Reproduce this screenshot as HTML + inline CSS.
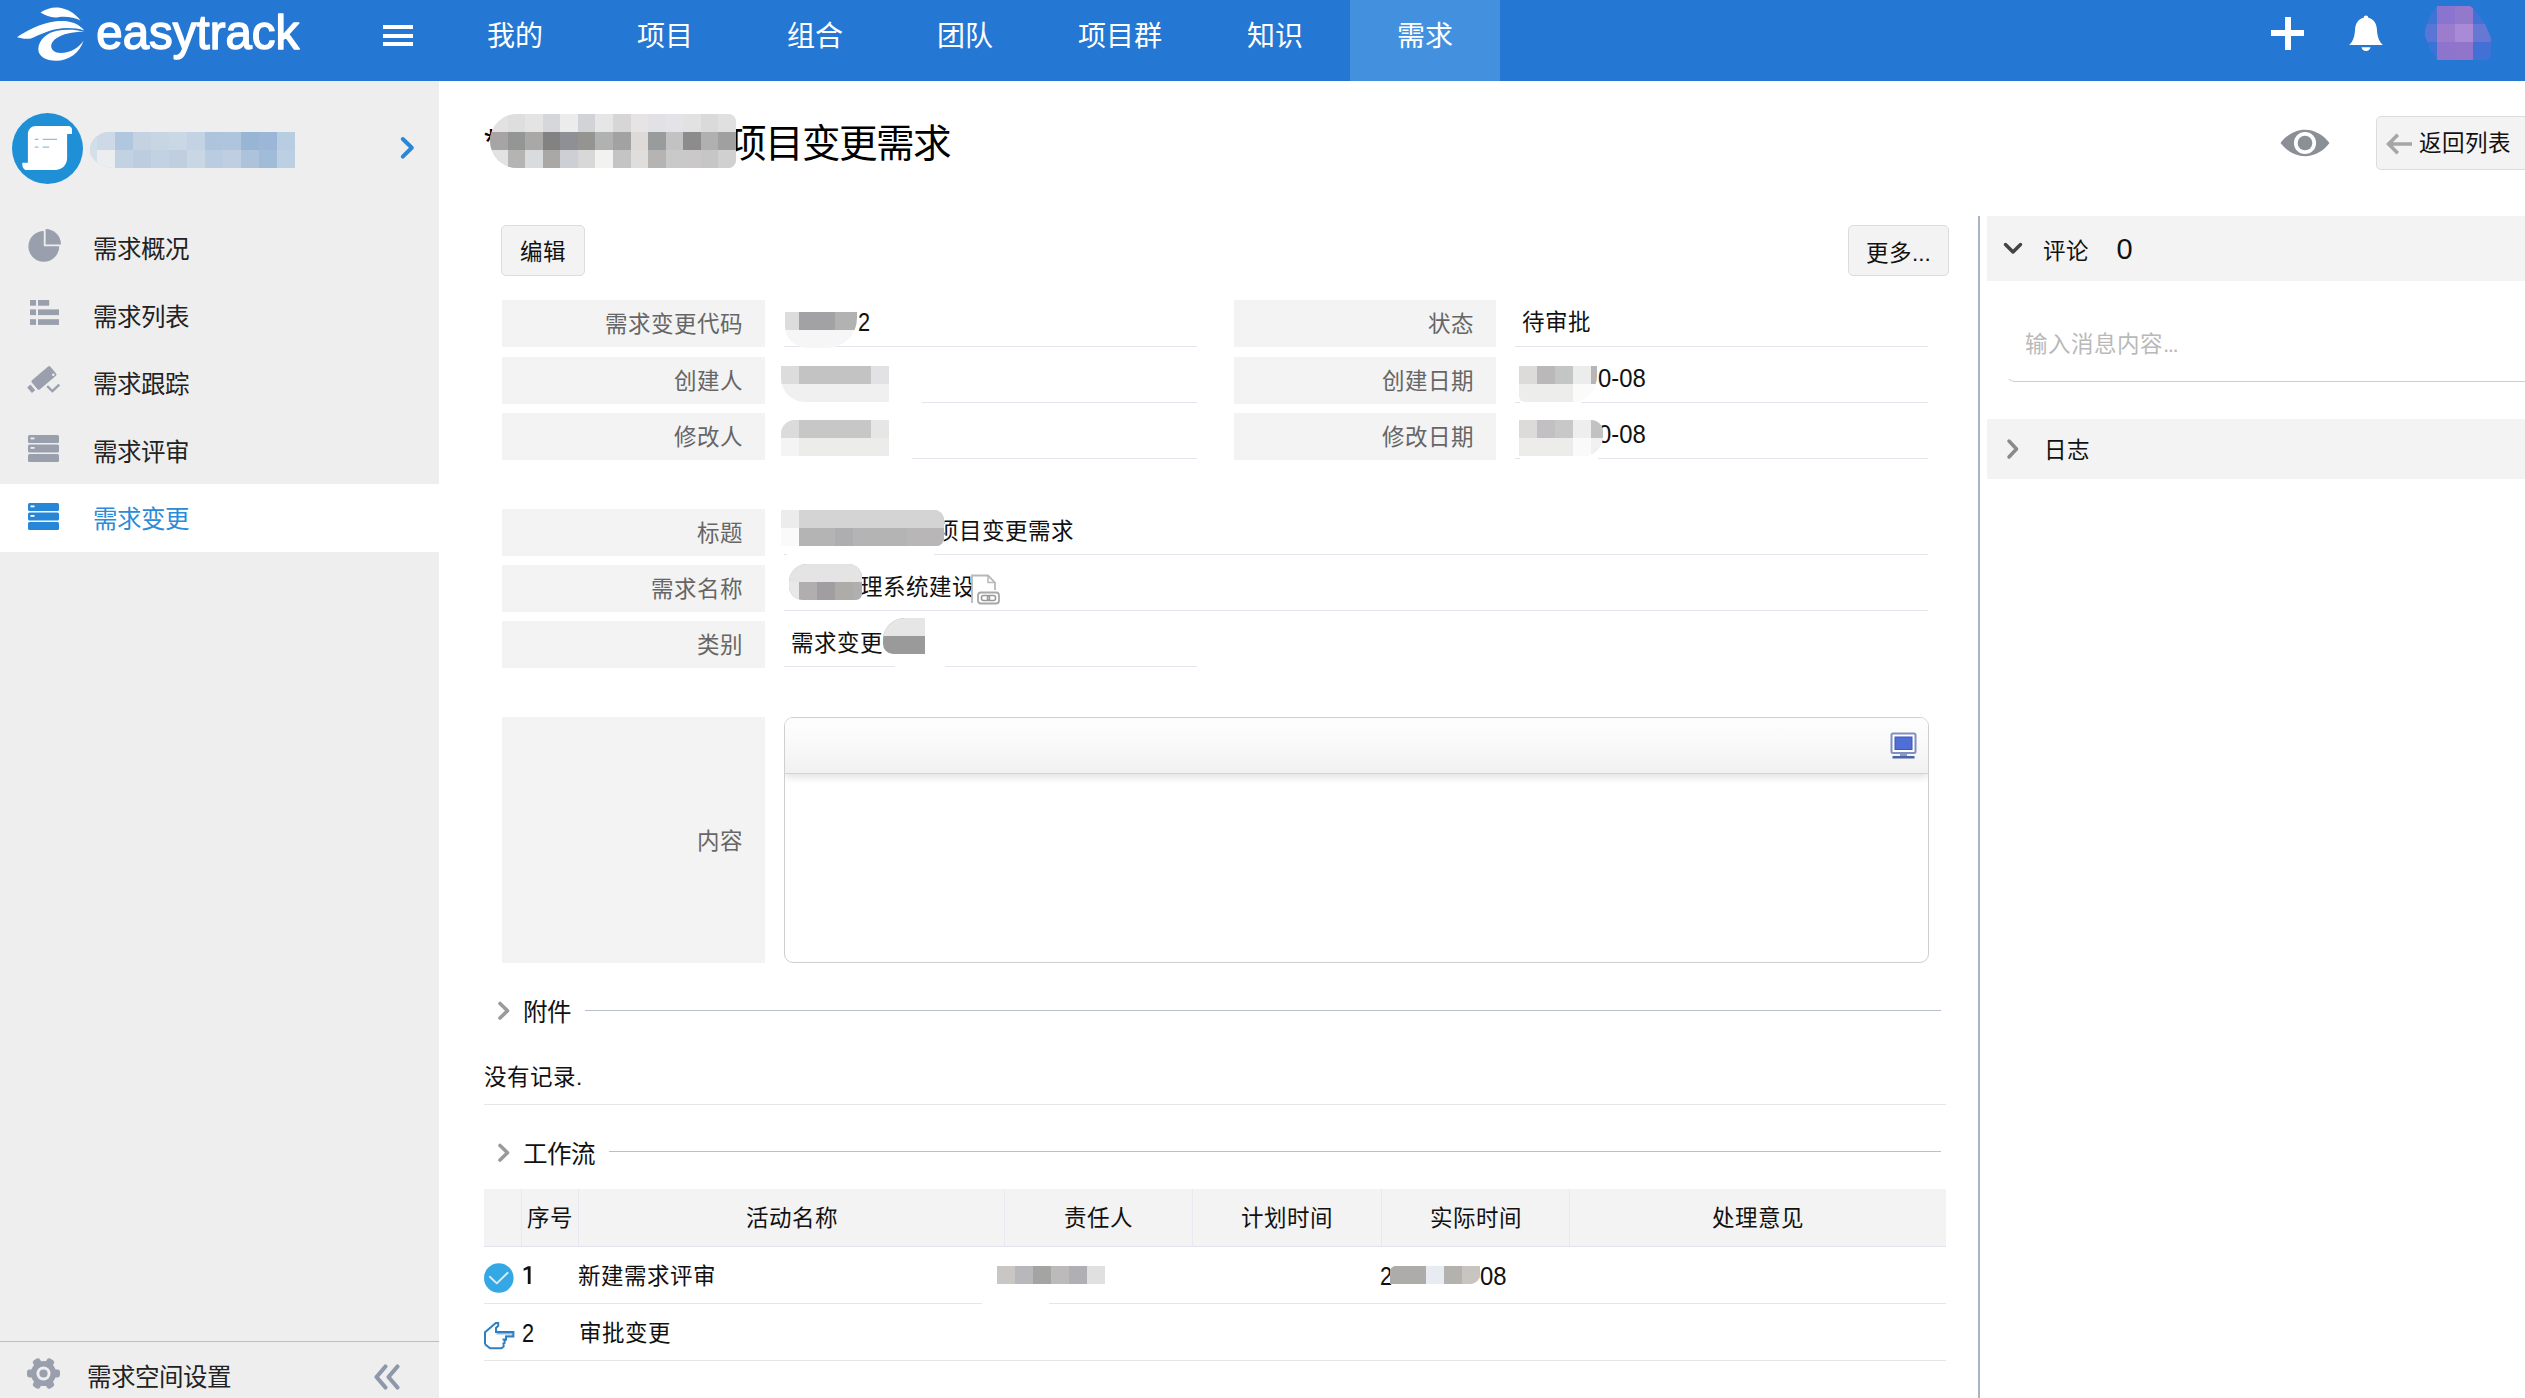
<!DOCTYPE html>
<html lang="zh-CN">
<head>
<meta charset="utf-8">
<title>easytrack</title>
<style>
*{box-sizing:border-box;margin:0;padding:0}
html,body{width:2525px;height:1398px;overflow:hidden;background:#fff}
body{position:relative;font-family:"Liberation Sans",sans-serif;font-size:22.5px;color:#111;line-height:1}
.abs{position:absolute}
.t{position:absolute;white-space:nowrap;line-height:1;margin-top:1px}
/* header */
#hdr{position:absolute;left:0;top:0;width:2525px;height:81px;background:#2577d4;z-index:2}
#hdr .nav{position:absolute;top:0;height:81px;line-height:74.5px;color:#fff;font-size:28px;text-align:center;white-space:nowrap}
#hdr .act{background:#4391de}
/* sidebar */
#side{position:absolute;left:0;top:80px;width:439px;height:1318px;background:#eeeeee}
.mi{position:absolute;left:0;width:439px;height:67.5px}
.mi .lb{position:absolute;left:93.300px;top:0;line-height:71px;font-size:24.5px;color:#222;white-space:nowrap}
.mi.on{background:#fff}
.mi.on .lb{color:#2b8bd8}
.mi svg{position:absolute}
/* buttons */
.btn{position:absolute;background:#f3f3f3;border:1.5px solid #dcdcdc;border-radius:5px;text-align:center;white-space:nowrap;color:#111}
/* form */
.lab{position:absolute;background:#f3f3f3;height:47px;line-height:49px;text-align:right;padding-right:22px;color:#666;font-size:22.5px;white-space:nowrap}
.val{position:absolute;height:47px;line-height:46px;border-bottom:1.5px solid #e4e4ee;font-size:22.5px;color:#111;padding-left:7px;white-space:nowrap}
.mz{position:absolute;display:grid}
.hr{position:absolute;height:1.5px}
.d{display:block;font-size:26.500px;transform:scaleX(.9);transform-origin:0 100%;line-height:1}
.th{position:absolute;top:1189px;height:57px;line-height:60px;text-align:center;font-size:22.5px;color:#111;border-left:1.5px solid #e8e8f0;white-space:nowrap}
</style>
</head>
<body>
<!-- HEADER -->
<div id="hdr">
  <svg class="abs" style="left:0;top:0" width="100" height="72" viewBox="0 0 100 72">
    <g fill="#fff">
      <path d="M40.500 12.600C45 9 52 7 58 7.500C67 8.500 75 13 80.500 20.500C74 17.200 66 16.200 58 17.200C52 18 46 16 40.500 12.600Z"/>
      <path d="M17 37.300C26 31 40 23.500 56 21.300C66 20 77 21.500 84.300 30.400C76 27.700 66 27.500 57 28.900C47 30.700 39 34.900 31 38.500C26 39.300 21 38.500 17 37.300Z"/>
      <path d="M84.300 31.800C76 29.400 66 29.200 57 30.700C47 32.500 38.500 40 38.300 49C38.300 56.500 46 60.800 56 60.800C69 60.800 80 52.500 83.600 40.500C79 48 70 53 61 53C54.500 53 50.800 49.500 51.200 45.500C51.800 40 59 35.300 68 33.400C73 32.300 79 31.700 84.300 31.800Z"/>
    </g>
  </svg>
  <svg class="abs" style="left:90px;top:0" width="220" height="72" viewBox="0 0 220 72">
    <text x="6.300" y="48.800" fill="#fff" stroke="#fff" stroke-width="1.500" stroke-linejoin="round" font-family="Liberation Sans, sans-serif" font-size="49" textLength="203" lengthAdjust="spacingAndGlyphs">easytrack</text>
  </svg>
  <div class="abs" style="left:382.6px;top:25.3px;width:30.4px;height:3.8px;background:#fff"></div>
  <div class="abs" style="left:382.6px;top:33.8px;width:30.4px;height:3.8px;background:#fff"></div>
  <div class="abs" style="left:382.6px;top:42.2px;width:30.4px;height:3.8px;background:#fff"></div>
  <div class="nav" style="left:440px;width:150px">我的</div>
  <div class="nav" style="left:590px;width:150px">项目</div>
  <div class="nav" style="left:740px;width:150px">组合</div>
  <div class="nav" style="left:890px;width:150px">团队</div>
  <div class="nav" style="left:1040px;width:160px">项目群</div>
  <div class="nav" style="left:1200px;width:150px">知识</div>
  <div class="nav act" style="left:1350px;width:150px">需求</div>
  <!-- plus -->
  <div class="abs" style="left:2271px;top:30px;width:33px;height:6px;background:#fff"></div>
  <div class="abs" style="left:2284.5px;top:17px;width:6px;height:33px;background:#fff"></div>
  <!-- bell -->
  <svg class="abs" style="left:2348px;top:13px" width="36" height="42" viewBox="0 0 36 42">
    <path fill="#fff" d="M18 2.5c1.3 0 2.2.9 2.3 2.2 5.3 1 8.2 5.600 8.600 11.300.3 5 .9 9.500 3.500 13.200.8 1.200 1.700 2 2.400 2.800H1.200c.7-.8 1.600-1.600 2.400-2.800 2.600-3.700 3.200-8.200 3.500-13.200.4-5.700 3.300-10.300 8.600-11.300.1-1.300 1-2.200 2.300-2.200z"/>
    <path fill="#fff" d="M13.500 34.200h9c-.3 2.300-2.100 3.800-4.500 3.800s-4.200-1.500-4.500-3.800z"/>
  </svg>
  <!-- avatar mosaic -->
  <div class="abs" style="left:2425px;top:6px;width:66px;height:54px;overflow:hidden;clip-path:polygon(12px 0,45px 0,48px 2px,54px 9px,60px 18px,66px 32px,66px 50px,62px 54px,12px 54px,5px 43px,0 30px,0 24px,5px 10px)">
    <div class="abs" style="left:0px;top:0px;width:12px;height:18px;background:#3f74d6"></div>
    <div class="abs" style="left:12px;top:0px;width:18px;height:18px;background:#8b74cf"></div>
    <div class="abs" style="left:30px;top:0px;width:18px;height:18px;background:#9279cc"></div>
    <div class="abs" style="left:48px;top:0px;width:18px;height:18px;background:#4272d6"></div>
    <div class="abs" style="left:0px;top:18px;width:12px;height:18px;background:#5a76d4"></div>
    <div class="abs" style="left:12px;top:18px;width:18px;height:18px;background:#9c7ccd"></div>
    <div class="abs" style="left:30px;top:18px;width:18px;height:18px;background:#a98ad6"></div>
    <div class="abs" style="left:48px;top:18px;width:18px;height:18px;background:#6678d4"></div>
    <div class="abs" style="left:0px;top:36px;width:12px;height:18px;background:#3a73d5"></div>
    <div class="abs" style="left:12px;top:36px;width:18px;height:18px;background:#8d74cd"></div>
    <div class="abs" style="left:30px;top:36px;width:18px;height:18px;background:#9075cb"></div>
    <div class="abs" style="left:48px;top:36px;width:18px;height:18px;background:#4270d4"></div>
  </div>
</div>

<!-- SIDEBAR -->
<div id="side">
  <div class="abs" style="left:12px;top:33px;width:71px;height:71px;border-radius:50%;background:#2090d6"></div>
  <svg class="abs" style="left:0;top:20px" width="100" height="100" viewBox="0 100 100 100">
    <path fill="#fff" d="M36 126.100H68.500C70.500 126.100 72 127.800 72 130V134H67.100V158C67.100 165 62 170 55 170H26.500C24 170 22.300 167.500 22.300 164V162.700H27.900V134C27.900 129.500 31.500 126.100 36 126.100Z"/>
    <path stroke="#86c2ec" stroke-width="1.300" fill="none" d="M34.800 139.300h3.600M42.700 139.300h14.300M34.800 147.100h3.600M42.700 147.100h6.500"/>
  </svg>
  <div id="sbmz" class="abs" style="left:89.700px;top:52px;width:205.300px;height:36px;border-radius:20px 0 0 26px/18px 0 0 18px;overflow:hidden;background:#c5d3e2">
    <div class="abs" style="left:0.0px;top:0;width:7.3px;height:18px;background:#cfdfea"></div>
    <div class="abs" style="left:0.0px;top:18px;width:7.3px;height:18px;background:#d5e1ea"></div>
    <div class="abs" style="left:7.0px;top:0;width:18.6px;height:18px;background:#cdd9e6"></div>
    <div class="abs" style="left:7.0px;top:18px;width:18.6px;height:18px;background:#ecedee"></div>
    <div class="abs" style="left:25.3px;top:0;width:18.3px;height:18px;background:#b1c7df"></div>
    <div class="abs" style="left:25.3px;top:18px;width:18.3px;height:18px;background:#c3d2e2"></div>
    <div class="abs" style="left:43.3px;top:0;width:18.3px;height:18px;background:#c4d2e2"></div>
    <div class="abs" style="left:43.3px;top:18px;width:18.3px;height:18px;background:#bccde0"></div>
    <div class="abs" style="left:61.3px;top:0;width:18.3px;height:18px;background:#c8d5e3"></div>
    <div class="abs" style="left:61.3px;top:18px;width:18.3px;height:18px;background:#c3d2e2"></div>
    <div class="abs" style="left:79.3px;top:0;width:18.3px;height:18px;background:#cad7e4"></div>
    <div class="abs" style="left:79.3px;top:18px;width:18.3px;height:18px;background:#bfcfe0"></div>
    <div class="abs" style="left:97.3px;top:0;width:18.3px;height:18px;background:#c4d3e3"></div>
    <div class="abs" style="left:97.3px;top:18px;width:18.3px;height:18px;background:#c9d7e4"></div>
    <div class="abs" style="left:115.3px;top:0;width:18.3px;height:18px;background:#aec3dc"></div>
    <div class="abs" style="left:115.3px;top:18px;width:18.3px;height:18px;background:#baccdf"></div>
    <div class="abs" style="left:133.3px;top:0;width:18.3px;height:18px;background:#afc4dd"></div>
    <div class="abs" style="left:133.3px;top:18px;width:18.3px;height:18px;background:#bfcfe1"></div>
    <div class="abs" style="left:151.3px;top:0;width:18.3px;height:18px;background:#98b5d5"></div>
    <div class="abs" style="left:151.3px;top:18px;width:18.3px;height:18px;background:#adc3dc"></div>
    <div class="abs" style="left:169.3px;top:0;width:18.3px;height:18px;background:#9bb6d6"></div>
    <div class="abs" style="left:169.3px;top:18px;width:18.3px;height:18px;background:#a1bcd9"></div>
    <div class="abs" style="left:187.3px;top:0;width:18.3px;height:18px;background:#b9cde2"></div>
    <div class="abs" style="left:187.3px;top:18px;width:18.3px;height:18px;background:#bdcfe2"></div>
  </div>
  <svg class="abs" style="left:398px;top:55.100px" width="20" height="26" viewBox="0 0 20 26">
    <path d="M4.800 4l9 8.800-9 8.800" fill="none" stroke="#2b86d6" stroke-width="4" stroke-linecap="round" stroke-linejoin="round"/>
  </svg>

  <!-- menu items: top relative to #side (80px offset) -->
  <div class="mi" style="top:134px">
    <svg style="left:27.700px;top:13.800px" width="34" height="34" viewBox="0 0 34 34">
      <path fill="#9a9fae" d="M15.800 2.900A15.400 15.400 0 1 0 31.200 18.300H15.800z"/>
      <path fill="#9a9fae" d="M17.600 1.100V16.500H33A15.400 15.400 0 0 0 17.600 1.100z"/>
    </svg>
    <div class="lb">需求概况</div>
  </div>
  <div class="mi" style="top:201.500px">
    <svg style="left:30px;top:18.500px" width="31" height="28" viewBox="0 0 31 28">
      <g fill="#9a9fae"><rect x="0" y="0" width="6" height="5.700"/><rect x="8" y="0" width="11.200" height="5.700"/>
      <rect x="0" y="9.400" width="6" height="5.700"/><rect x="8" y="9.400" width="21" height="5.700"/>
      <rect x="0" y="19.200" width="6" height="5.700"/><rect x="8" y="19.200" width="21" height="5.700"/></g>
    </svg>
    <div class="lb">需求列表</div>
  </div>
  <div class="mi" style="top:269px">
    <svg style="left:0;top:0" width="80" height="67" viewBox="0 349 80 67">
      <g fill="#9a9fae">
        <rect x="-12.200" y="-6" width="24.400" height="12" rx="1.600" transform="translate(43.950 377.950) rotate(-40.400)"/>
        <rect x="-2.150" y="-3.700" width="4.300" height="7.400" transform="translate(31.200 388.800) rotate(-40.400)"/>
      </g>
      <circle cx="53.300" cy="374.800" r="1.300" fill="#eee"/>
      <path d="M47.200 386.100L52.400 391.200L59.300 384.700" fill="none" stroke="#9a9fae" stroke-width="2.300"/>
    </svg>
    <div class="lb">需求跟踪</div>
  </div>
  <div class="mi" style="top:336.500px">
    <svg style="left:28px;top:18px" width="31" height="27" viewBox="0 0 31 27">
      <g fill="#9a9fae"><rect x="0" y="0" width="31" height="8" rx="1.500"/><rect x="0" y="9.500" width="31" height="8" rx="1.500"/><rect x="0" y="19" width="31" height="8" rx="1.500"/></g>
      <rect x="2.500" y="2.500" width="4" height="1.800" fill="#eee"/><rect x="2.500" y="12" width="4" height="1.800" fill="#eee"/>
    </svg>
    <div class="lb">需求评审</div>
  </div>
  <div class="mi on" style="top:404px">
    <svg style="left:28px;top:18.500px" width="31" height="27" viewBox="0 0 31 27">
      <g fill="#2687d8"><rect x="0" y="0" width="31" height="8" rx="1.500"/><rect x="0" y="9.500" width="31" height="8" rx="1.500"/><rect x="0" y="19" width="31" height="8" rx="1.500"/></g>
      <rect x="2.500" y="2.500" width="4" height="1.800" fill="#fff"/><rect x="2.500" y="12" width="4" height="1.800" fill="#fff"/>
    </svg>
    <div class="lb">需求变更</div>
  </div>

  <!-- bottom -->
  <div class="abs" style="left:0;top:1260.500px;width:439px;height:1.500px;background:#b4bfd0"></div>
  <svg class="abs" style="left:26px;top:1275.500px" width="35" height="35" viewBox="0 0 35 35">
    <g transform="translate(17.500 17.500)">
      <g fill="#9a9fae">
        <circle r="12.600"/>
        <rect x="-4" y="-16.500" width="8" height="33" rx="2.400" transform="rotate(90)"/>
        <rect x="-4" y="-16.300" width="8" height="32.600" rx="2.400" transform="rotate(30)"/>
        <rect x="-4" y="-16.300" width="8" height="32.600" rx="2.400" transform="rotate(150)"/>
      </g>
      <circle r="7" fill="#eee"/>
      <circle r="4.100" fill="#9a9fae"/>
    </g>
  </svg>
  <div class="t" style="left:86.500px;top:1285px;font-size:24.5px;color:#222">需求空间设置</div>
  <svg class="abs" style="left:373px;top:1283px" width="28" height="28" viewBox="0 0 28 28">
    <path d="M12.500 3.500L3.500 14l9 10.500M24.500 3.500L15.500 14l9 10.500" fill="none" stroke="#8e98ab" stroke-width="4.200" stroke-linecap="round" stroke-linejoin="round"/>
  </svg>
</div>

<!-- TITLE -->
<div class="t" style="left:484px;top:124px;font-size:36px;color:#000">*</div>
<div class="t" id="ttl" style="left:727.5px;top:124px;font-size:38.6px;letter-spacing:-1.9px;color:#000">项目变更需求</div>
<div class="abs" style="left:490px;top:114px;width:246px;height:54px;border-radius:27px 8px 8px 27px;overflow:hidden;background:#dcdcdc">
  <div class="mz" style="left:0;top:0;width:246px;height:54px;grid-template-columns:repeat(14,1fr);grid-template-rows:repeat(3,18px)">
    <i style="background:#e2e2e2"></i><i style="background:#dedede"></i><i style="background:#e4e4e4"></i><i style="background:#d6d7da"></i><i style="background:#ececec"></i><i style="background:#d2d3d6"></i><i style="background:#e6e6e6"></i><i style="background:#d6d6d6"></i><i style="background:#e6e4e4"></i><i style="background:#e2e2e6"></i><i style="background:#e4e4e8"></i><i style="background:#e2e2e2"></i><i style="background:#dadada"></i><i style="background:#e0e0e0"></i>
    <i style="background:#a6a4a4"></i><i style="background:#949696"></i><i style="background:#aaa8a6"></i><i style="background:#828282"></i><i style="background:#8e9096"></i><i style="background:#969490"></i><i style="background:#b0b2b2"></i><i style="background:#a2a2a2"></i><i style="background:#dedad8"></i><i style="background:#989c9c"></i><i style="background:#c2c2c2"></i><i style="background:#8c8c8c"></i><i style="background:#b0b0b0"></i><i style="background:#a0a0a0"></i>
    <i style="background:#e2e2e2"></i><i style="background:#b6b4b2"></i><i style="background:#d8dcde"></i><i style="background:#aaa8a6"></i><i style="background:#cecfd4"></i><i style="background:#d8d8d8"></i><i style="background:#f2f2f0"></i><i style="background:#c4c4c4"></i><i style="background:#e0dedc"></i><i style="background:#b6b4b2"></i><i style="background:#c8caca"></i><i style="background:#cac8c8"></i><i style="background:#c6c6c6"></i><i style="background:#d0d0d0"></i>
  </div>
</div>
<!-- eye -->
<svg class="abs" style="left:2278.500px;top:126.900px" width="54" height="32" viewBox="0 0 54 32">
  <path fill="#8b8f96" d="M1.500 16C8 7.500 17 2.800 26 2.800S44 7.500 50.500 16C44 24.500 35 29.200 26 29.200S8 24.500 1.500 16z"/>
  <circle cx="26" cy="16" r="11.100" fill="#fff"/>
  <circle cx="26" cy="16" r="7.300" fill="#8b8f96"/>
</svg>
<div class="btn" style="left:2376px;top:116px;width:170px;height:53.700px"></div>
<svg class="abs" style="left:2385px;top:131px" width="28" height="26" viewBox="0 0 28 26">
  <path d="M12.800 3.800L3.600 13l9.200 9.200M4 13H27" fill="none" stroke="#a6a6a6" stroke-width="3.600"/>
</svg>
<div class="t" style="left:2418.500px;top:132px;font-size:22.5px;color:#111">返回列表</div>

<!-- ACTION BUTTONS -->
<div class="btn" style="left:501px;top:225px;width:84px;height:51px;line-height:54.5px">编辑</div>
<div class="btn" style="left:1848px;top:225px;width:101px;height:51px;line-height:55px">更多...</div>

<!-- FORM -->
<div class="lab" style="left:502px;top:300px;width:263px">需求变更代码</div>
<div class="val" style="left:784px;top:300px;width:413px"></div>
<div class="t" style="left:857.500px;top:308px"><span class="d" style="transform:scaleX(.82)">2</span></div>
<div class="lab" style="left:502px;top:356.500px;width:263px">创建人</div>
<div class="val" style="left:784px;top:356px;width:413px"></div>
<div class="lab" style="left:502px;top:412.500px;width:263px">修改人</div>
<div class="val" style="left:784px;top:412px;width:413px"></div>

<div class="lab" style="left:1234px;top:300px;width:262px">状态</div>
<div class="val" style="left:1515px;top:300px;width:413px">待审批</div>
<div class="lab" style="left:1234px;top:356.500px;width:262px">创建日期</div>
<div class="val" style="left:1515px;top:356px;width:413px"></div>
<div class="t" style="left:1597.500px;top:364px"><span class="d">0-08</span></div>
<div class="lab" style="left:1234px;top:412.500px;width:262px">修改日期</div>
<div class="val" style="left:1515px;top:412px;width:413px"></div>
<div class="t" style="left:1597.500px;top:420px"><span class="d">0-08</span></div>

<div class="lab" style="left:502px;top:509px;width:263px">标题</div>
<div class="val" style="left:784px;top:508px;width:1144px;line-height:48px"><span style="margin-left:145px">项目变更需求</span></div>
<div class="lab" style="left:502px;top:565px;width:263px">需求名称</div>
<div class="val" style="left:784px;top:564px;width:1144px;line-height:48px"><span style="margin-left:68.500px">理系统建设</span></div>
<div class="lab" style="left:502px;top:621px;width:263px">类别</div>
<div class="val" style="left:784px;top:620px;width:413px;line-height:48px">需求变更</div>

<!-- halo patches hiding underline segments (as in target) -->
<div class="abs" style="left:784px;top:400.500px;width:138px;height:4px;background:#fff"></div>
<div class="abs" style="left:784px;top:456.500px;width:128px;height:4px;background:#fff"></div>
<div class="abs" style="left:787px;top:552.500px;width:147px;height:4px;background:#fff"></div>
<div class="abs" style="left:894.500px;top:664.500px;width:50.500px;height:4px;background:#fff"></div>
<div class="abs" style="left:1519.500px;top:400.500px;width:61.500px;height:4px;background:#fff"></div>
<div class="abs" style="left:1519.500px;top:456.500px;width:78.500px;height:4px;background:#fff"></div>
<!-- mosaics -->
<div class="abs" style="left:785px;top:312px;width:72px;height:36px;border-radius:0 0 30px 22px;overflow:hidden;background:#f6f6f6">
  <div class="abs" style="left:0;top:0;width:14px;height:18px;background:#dcdcdc"></div>
  <div class="abs" style="left:14px;top:0;width:36px;height:18px;background:#a2a2a4"></div>
  <div class="abs" style="left:50px;top:0;width:22px;height:18px;background:#b2b2b2"></div>
</div>
<div class="abs" style="left:781px;top:366px;width:108px;height:36px;border-radius:0 0 0 24px;overflow:hidden;background:#f0f0f0">
  <div class="abs" style="left:0;top:0;width:18px;height:18px;background:#dcdcdc"></div>
  <div class="abs" style="left:18px;top:0;width:72px;height:18px;background:#c4c3c4"></div>
  <div class="abs" style="left:90px;top:0;width:18px;height:18px;background:#e2e2e4"></div>
</div>
<div class="abs" style="left:781px;top:420px;width:108px;height:36px;border-radius:14px 0 0 0;overflow:hidden;background:#ececea">
  <div class="abs" style="left:0;top:0;width:18px;height:18px;background:#dcdbdc"></div>
  <div class="abs" style="left:18px;top:0;width:72px;height:18px;background:#c8c7c8"></div>
  <div class="abs" style="left:90px;top:0;width:18px;height:18px;background:#e6e6e6"></div>
  <div class="abs" style="left:0;top:18px;width:18px;height:18px;background:#f4f4f4"></div>
</div>
<div class="abs" style="left:1519px;top:366px;width:78px;height:36px;border-radius:0 0 26px 6px;overflow:hidden;background:#ededec">
  <div class="abs" style="left:0;top:0;width:18px;height:18px;background:#dcdbda"></div>
  <div class="abs" style="left:18px;top:0;width:18px;height:18px;background:#bab8b8"></div>
  <div class="abs" style="left:36px;top:0;width:18px;height:18px;background:#c4c6c6"></div>
  <div class="abs" style="left:54px;top:0;width:18px;height:18px;background:#ececec"></div>
  <div class="abs" style="left:72px;top:0;width:6px;height:18px;background:#b8b6b4"></div>
  <div class="abs" style="left:54px;top:18px;width:24px;height:18px;background:#fbfbfb"></div>
</div>
<div class="abs" style="left:1519px;top:420px;width:84px;height:36px;border-radius:0 12px 20px 0;overflow:hidden;background:#ececeb">
  <div class="abs" style="left:0;top:0;width:18px;height:18px;background:#dcdbda"></div>
  <div class="abs" style="left:18px;top:0;width:18px;height:18px;background:#c2c0c2"></div>
  <div class="abs" style="left:36px;top:0;width:18px;height:18px;background:#c8c8c8"></div>
  <div class="abs" style="left:54px;top:0;width:18px;height:18px;background:#eeeeee"></div>
  <div class="abs" style="left:72px;top:0;width:12px;height:18px;background:#c2c2c0"></div>
  <div class="abs" style="left:54px;top:18px;width:18px;height:18px;background:#fafafa"></div>
  <div class="abs" style="left:72px;top:18px;width:12px;height:18px;background:#f0f0f0"></div>
</div>
<div class="abs" style="left:781px;top:510px;width:163px;height:36px;border-radius:0 10px 8px 0;overflow:hidden;background:#b4b4b4">
  <div class="abs" style="left:0;top:0;width:18px;height:18px;background:#ececec"></div>
  <div class="abs" style="left:0;top:18px;width:18px;height:18px;background:#fafafa"></div>
  <div class="abs" style="left:18px;top:0;width:145px;height:18px;background:#d4d4d4"></div>
  <div class="abs" style="left:54px;top:18px;width:18px;height:18px;background:#aeaeb0"></div>
  <div class="abs" style="left:126px;top:18px;width:37px;height:18px;background:#b8b6b6"></div>
</div>
<div class="abs" style="left:789px;top:564px;width:73px;height:36px;border-radius:18px 14px 6px 14px;overflow:hidden;background:#b0aeae">
  <div class="abs" style="left:0;top:0;width:73px;height:18px;background:#e4e4e4"></div>
  <div class="abs" style="left:0;top:18px;width:10px;height:18px;background:#e8e8e8"></div>
  <div class="abs" style="left:28px;top:18px;width:18px;height:18px;background:#a09ea0"></div>
  <div class="abs" style="left:46px;top:18px;width:18px;height:18px;background:#aeaca8"></div>
</div>
<div class="abs" style="left:883px;top:618px;width:42px;height:36px;border-radius:22px 0 0 10px;overflow:hidden;background:#9a9a9a">
  <div class="abs" style="left:0;top:0;width:42px;height:18px;background:#e6e6e6"></div>
</div>
<!-- link icon after 需求名称 -->
<svg class="abs" style="left:969px;top:573px" width="32" height="34" viewBox="0 0 32 34">
  <path d="M3 30V2.500h16l7 7V17" fill="#fff" stroke="#b8b8b8" stroke-width="1.800"/>
  <path d="M19 2.500v7h7" fill="none" stroke="#b8b8b8" stroke-width="1.500"/>
  <rect x="9" y="19.500" width="21" height="11" rx="3" fill="#fff" stroke="#a8a8a8" stroke-width="1.800"/>
  <rect x="12.500" y="22.500" width="8" height="5" rx="2" fill="none" stroke="#999" stroke-width="1.600"/>
  <rect x="18.500" y="22.500" width="8" height="5" rx="2" fill="none" stroke="#999" stroke-width="1.600"/>
</svg>
<!-- table mosaics (drawn after table) -->

<!-- CONTENT EDITOR -->
<div class="lab" style="left:502px;top:717px;width:263px;height:246px;line-height:250px">内容</div>
<div class="abs" style="left:784px;top:717px;width:1145px;height:246px;border:1.500px solid #cfcfcf;border-radius:9px;background:#fff;overflow:hidden">
  <div class="abs" style="left:0;top:0;width:100%;height:56px;background:linear-gradient(#fdfdfd,#fafafa 40%,#f1f1f1);border-bottom:1.500px solid #d4d4d4;box-shadow:0 3px 8px rgba(0,0,0,.13)"></div>
  <svg class="abs" style="left:1104.500px;top:14px" width="28" height="28" viewBox="0 0 28 28">
    <rect x="1.500" y="1.500" width="24" height="19.500" rx="1.500" fill="#fff" stroke="#7f8fc0" stroke-width="2"/>
    <rect x="5" y="5" width="17" height="12.500" fill="#4f6fd6" stroke="#3c57b4" stroke-width="1"/>
    <rect x="10" y="21.500" width="7" height="2.500" fill="#8c9ac4"/>
    <rect x="2.500" y="24" width="22" height="2.500" fill="#4d63a8"/>
  </svg>
</div>

<!-- ATTACHMENT SECTION -->
<svg class="abs" style="left:496px;top:1000px" width="16" height="22" viewBox="0 0 16 22">
  <path d="M4 3.500l7.500 7.200L4 18" fill="none" stroke="#9a9a9a" stroke-width="3.600" stroke-linecap="round" stroke-linejoin="round"/>
</svg>
<div class="t" style="left:523px;top:1000.300px;font-size:24.500px;color:#111">附件</div>
<div class="hr" style="left:585px;top:1009.500px;width:1356px;background:#b7c0cc"></div>
<div class="t" style="left:484px;top:1066px;font-size:22.5px;color:#111">没有记录.</div>
<div class="hr" style="left:484px;top:1103.500px;width:1462px;background:#e6e6e6"></div>

<!-- WORKFLOW SECTION -->
<svg class="abs" style="left:496px;top:1141.500px" width="16" height="22" viewBox="0 0 16 22">
  <path d="M4 3.500l7.500 7.200L4 18" fill="none" stroke="#9a9a9a" stroke-width="3.600" stroke-linecap="round" stroke-linejoin="round"/>
</svg>
<div class="t" style="left:523px;top:1142px;font-size:24.500px;color:#111">工作流</div>
<div class="hr" style="left:609px;top:1150.500px;width:1332px;background:#b7c0cc"></div>

<div class="abs" style="left:484px;top:1189px;width:1462px;height:58px;background:#f3f3f3;border-bottom:1.500px solid #e3e3ec"></div>
<div class="th" style="left:521px;width:57px">序号</div>
<div class="th" style="left:578px;width:426px">活动名称</div>
<div class="th" style="left:1004px;width:188px">责任人</div>
<div class="th" style="left:1192px;width:189px">计划时间</div>
<div class="th" style="left:1381px;width:188px">实际时间</div>
<div class="th" style="left:1569px;width:377px">处理意见</div>
<div class="hr" style="left:484px;top:1302.500px;width:1462px;background:#e6e6ea"></div>
<div class="hr" style="left:484px;top:1359.500px;width:1462px;background:#e6e6ea"></div>

<!-- row 1 -->
<svg class="abs" style="left:483px;top:1262px" width="32" height="32" viewBox="0 0 32 32">
  <circle cx="15.800" cy="16" r="14.800" fill="#34a8e4"/>
  <path d="M6.800 14.800l7 6.600L24.700 10.800" fill="none" stroke="#d4edfa" stroke-width="1.900" stroke-linecap="round" stroke-linejoin="round"/>
</svg>
<svg class="abs" style="left:523px;top:1265px" width="10" height="20" viewBox="0 0 10 20"><path d="M0.600 5.800V3.600L5 1.200H7.600V18.900H4.800V4.200Z" fill="#111"/></svg>
<div class="t" style="left:578px;top:1265px">新建需求评审</div>
<div class="t" style="left:1380px;top:1262px"><span class="d" style="transform:scaleX(.82)">2</span></div>
<div class="t" style="left:1479.500px;top:1262px"><span class="d">08</span></div>
<!-- row 2 -->
<svg class="abs" style="left:483px;top:1320.500px" width="34" height="30" viewBox="0 0 34 30">
  <path d="M13.500 12.600H29.500V15.200H22.500" fill="none" stroke="#8db9e0" stroke-width="1.600"/>
  <path d="M2 23.200V11.200L12.800 2H15.200V4.800L13 7V11H30.400V14.600M30.400 13.800V15.400H23V18.600H19.500M23 18.600L21.600 19.600V22L19.600 23M20.600 23.500V25.500L18.500 27.300H7L2 23.200" fill="none" stroke="#2f7fc1" stroke-width="2" stroke-linejoin="miter"/>
</svg>
<div class="t" style="left:522px;top:1319px"><span class="d" style="transform:scaleX(.82)">2</span></div>
<div class="t" style="left:579px;top:1322px">审批变更</div>

<div class="abs" style="left:982px;top:1301.500px;width:67px;height:4px;background:#fff"></div>
<!-- table mosaics -->
<div class="abs" style="left:997px;top:1266px;width:108px;height:18px;overflow:hidden;background:#bcbabc">
  <div class="abs" style="left:0;top:0;width:18px;height:18px;background:#cac6c4"></div>
  <div class="abs" style="left:18px;top:0;width:18px;height:18px;background:#b8b8bc"></div>
  <div class="abs" style="left:36px;top:0;width:18px;height:18px;background:#a4a4a2"></div>
  <div class="abs" style="left:54px;top:0;width:18px;height:18px;background:#bcbaba"></div>
  <div class="abs" style="left:72px;top:0;width:18px;height:18px;background:#b0b0b4"></div>
  <div class="abs" style="left:90px;top:0;width:18px;height:18px;background:#e0e0e0"></div>
</div>
<div class="abs" style="left:1390px;top:1266px;width:90px;height:18px;border-radius:6px 0 10px 0;overflow:hidden;background:#b4b2b0">
  <div class="abs" style="left:0;top:0;width:36px;height:18px;background:#aeaca8"></div>
  <div class="abs" style="left:36px;top:0;width:18px;height:18px;background:#e8ecf2"></div>
  <div class="abs" style="left:54px;top:0;width:18px;height:18px;background:#b4b2ae"></div>
  <div class="abs" style="left:72px;top:0;width:18px;height:18px;background:#c8c4c0"></div>
</div>
<!-- RIGHT PANEL -->
<div class="abs" style="left:1977.500px;top:216px;width:2.500px;height:1182px;background:#aab5c3"></div>
<div class="abs" style="left:1987px;top:216px;width:538px;height:65px;background:#f3f3f3"></div>
<svg class="abs" style="left:2002px;top:240px" width="22" height="18" viewBox="0 0 22 18">
  <path d="M3.500 4.500l7.500 7.500 7.500-7.500" fill="none" stroke="#444" stroke-width="3.500" stroke-linecap="round" stroke-linejoin="round"/>
</svg>
<div class="t" style="left:2043px;top:240.300px;font-size:22.5px;color:#111">评论</div>
<div class="t" style="left:2116.500px;top:233.500px;font-size:29px;color:#111">0</div>
<div class="abs" style="left:2006px;top:300px;width:540px;height:82px;border-bottom:1.500px solid #c6ced8;border-left:1px solid transparent;border-radius:0 0 0 9px"></div>
<div class="t" style="left:2025px;top:333px;font-size:22.5px;color:#b9b9b9">输入消息内容<span style="letter-spacing:-1.5px">...</span></div>
<div class="abs" style="left:1987px;top:419px;width:538px;height:60px;background:#f3f3f3"></div>
<svg class="abs" style="left:2004px;top:437px" width="18" height="24" viewBox="0 0 18 24">
  <path d="M5 4l7.500 8L5 20" fill="none" stroke="#8a8a8a" stroke-width="3.500" stroke-linecap="round" stroke-linejoin="round"/>
</svg>
<div class="t" style="left:2044px;top:439px;font-size:22.5px;color:#111">日志</div>


</body>
</html>
